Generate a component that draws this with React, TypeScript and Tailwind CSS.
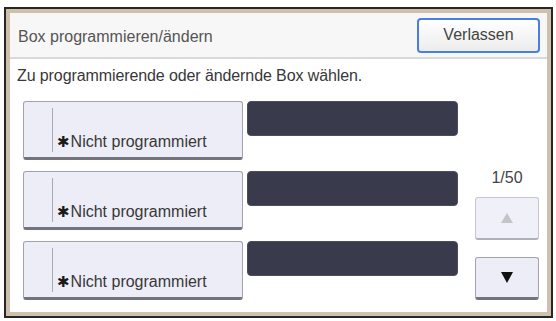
export default function App() {
  const rows = [0, 1, 2];
  return (
    <div className="w-[556px] h-[321px] bg-white overflow-hidden pt-[7px] pl-[4px] font-['Liberation_Sans',Arial,sans-serif]">
      <div className="w-[549px] h-[311px] border-2 border-[#262626] bg-[#cdc1ac] p-[4px]">
        <div className="h-full bg-white flex flex-col">
          <div className="h-[44px] bg-[#f7f7f7] flex items-center justify-between pl-[8px] pr-[7px]">
            <span className="text-[16px] leading-[18px] text-[#555] pt-[4px] tracking-[0px]">Box programmieren/ändern</span>
            <div className="w-[123px] h-[35px] rounded-[4px] border-2 border-[#4b7ee3] bg-gradient-to-b from-white to-[#ececec] flex items-center justify-center text-[16px] text-[#444]">
              Verlassen
            </div>
          </div>
          <div className="h-[2px] bg-[#d9d9d9]" />
          <div className="h-[42px] pl-[7px] pt-[8px] text-[16px] leading-[18px] text-[#383838] tracking-[-0.1px]">
            Zu programmierende oder ändernde Box wählen.
          </div>
          <div className="flex pl-[13px]">
            <div className="flex flex-col gap-[11px]">
              {rows.map((r) => (
                <div key={r} className="flex gap-[4px]">
                  <div className="w-[220px] h-[59px] rounded-[3px] border border-[#a2a2ae] border-b-[3px] border-b-[#73737e] bg-[#ededf7] pl-[28px] pt-[6px] pb-[6px]">
                    <div className="h-[44px] border-l border-[#a8a8b4] flex items-end pl-[4px] pb-[1px]">
                      <span className="text-[16px] leading-[18px] text-[#383838] flex items-center">
                        <span className="font-['DejaVu_Sans',sans-serif] text-[15px] leading-[18px] text-[#1a1a1a] mr-[1px]">✱</span>
                        Nicht programmiert
                      </span>
                    </div>
                  </div>
                  <div className="w-[211px] h-[35px] rounded-[4px] bg-[#3a3a4d] border border-[#4d4d62]" />
                </div>
              ))}
            </div>
            <div className="ml-[17px] w-[64px] flex flex-col">
              <div className="mt-[68px] h-[18px] text-center text-[16px] leading-[18px] text-[#444]">1/50</div>
              <div className="mt-[10px] h-[43px] rounded-[3px] border border-[#c6c6cf] border-b-2 border-b-[#b0b0ba] bg-[#f0f0f8] flex items-center justify-center">
                <svg width="12" height="10" viewBox="0 0 12 10"><polygon points="6,0 12,10 0,10" fill="#c4c4c8" /></svg>
              </div>
              <div className="mt-[17px] h-[43px] rounded-[3px] border border-[#a2a2ae] border-b-[3px] border-b-[#73737e] bg-[#ededf7] flex items-center justify-center">
                <svg width="12" height="11" viewBox="0 0 12 11"><polygon points="0,0 12,0 6,11" fill="#111" /></svg>
              </div>
            </div>
          </div>
        </div>
      </div>
    </div>
  );
}
